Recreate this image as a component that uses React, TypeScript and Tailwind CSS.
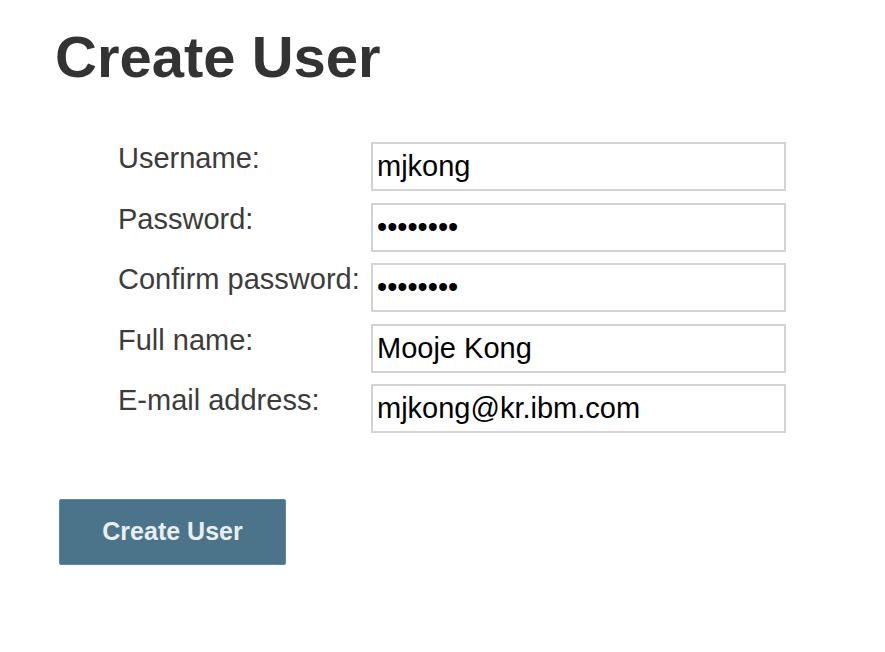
import { useState } from "react";

const FONT = { fontFamily: '"Liberation Sans", Arial, Helvetica, sans-serif' };

const FIELDS = [
  { id: "username", label: "Username:", type: "text", value: "mjkong" },
  { id: "password", label: "Password:", type: "password", value: "secret12" },
  { id: "confirm", label: "Confirm password:", type: "password", value: "secret12" },
  { id: "fullname", label: "Full name:", type: "text", value: "Mooje Kong" },
  { id: "email", label: "E-mail address:", type: "text", value: "mjkong@kr.ibm.com" },
];

export default function App() {
  const [values, setValues] = useState<Record<string, string>>(
    Object.fromEntries(FIELDS.map((f) => [f.id, f.value]))
  );

  return (
    <div className="min-h-screen bg-white pl-[55px] pt-[22px]" style={FONT}>
      <h1 className="text-[58px] font-bold leading-[70px] text-[#333333]">Create User</h1>

      <form className="mt-[50px]" onSubmit={(e) => e.preventDefault()}>
        <div className="ml-[63px] grid grid-cols-[253px_415px] gap-y-[11.5px]">
          {FIELDS.map((f) => (
            <div key={f.id} className="contents">
              <label htmlFor={f.id} className="h-[49px] pt-[1px] text-[29px] leading-[31px] text-[#3c3c3c]">
                {f.label}
              </label>
              <input
                id={f.id}
                type={f.type}
                value={values[f.id]}
                onChange={(e) => setValues({ ...values, [f.id]: e.target.value })}
                className="h-[49px] w-[415px] border-2 border-[#d3d3d3] bg-white px-[4px] text-[29px] text-black outline-none"
              />
            </div>
          ))}
        </div>

        <button
          type="submit"
          className="ml-[4px] mt-[66px] h-[66px] w-[227px] rounded-[2px] border border-[#5d879c] bg-[#4b7389] text-[25px] font-bold text-[#e8eef1]"
        >
          Create User
        </button>
      </form>
    </div>
  );
}
